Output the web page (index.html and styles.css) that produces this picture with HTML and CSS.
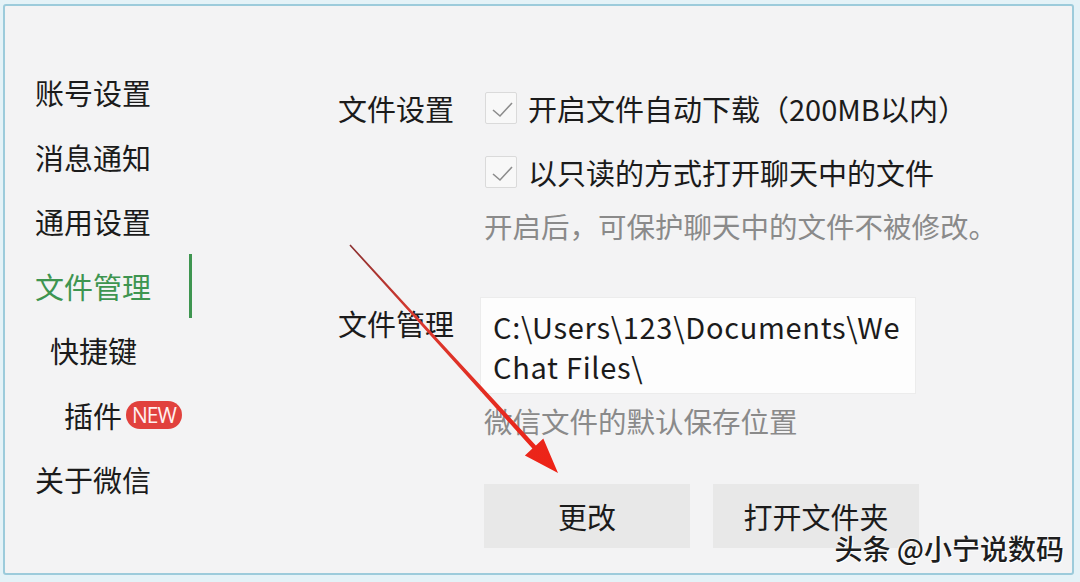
FILE: index.html
```html
<!DOCTYPE html>
<html lang="zh-CN">
  <head>
    <meta charset="UTF-8" />
    <meta name="viewport" content="width=device-width, initial-scale=1.0" />
    <title>设置</title>

    <link rel="stylesheet" href="styles.css">
  </head>
  <body>
    <div class="window">
      <nav class="menu">
        <div class="menu-item">账号设置</div>
        <div class="menu-item">消息通知</div>
        <div class="menu-item">通用设置</div>
        <div class="menu-item menu-item-active">文件管理</div>
        <div class="menu-item menu-sub">快捷键</div>
        <div class="menu-item menu-sub-2">插件 <span class="badge">NEW</span></div>
        <div class="menu-item">关于微信</div>
      </nav>

      <main class="settings">
        <div class="row">
          <div class="row-label">文件设置</div>
          <div class="row-body">
            <label class="check">
              <span class="check-box">
                <svg viewBox="0 0 32 32" width="32" height="32"><polyline points="8,18 15,24 27,11" /></svg>
              </span>
              开启文件自动下载（200MB以内）
            </label>
            <label class="check">
              <span class="check-box">
                <svg viewBox="0 0 32 32" width="32" height="32"><polyline points="8,18 15,24 27,11" /></svg>
              </span>
              以只读的方式打开聊天中的文件
            </label>
            <p class="hint">开启后，可保护聊天中的文件不被修改。</p>
          </div>
        </div>

        <div class="row row-path">
          <div class="row-label row-label-path">文件管理</div>
          <div class="row-body">
            <div class="path-box">C:\Users\123\Documents\We<br />Chat Files\</div>
            <p class="hint hint-path">微信文件的默认保存位置</p>
            <div class="btn-group">
              <button class="btn">更改</button>
              <button class="btn">打开文件夹</button>
            </div>
          </div>
        </div>
      </main>

      <svg class="arrow" width="1080" height="582" viewBox="0 0 1080 582">
        <defs>
          <linearGradient id="arrowGrad" x1="350" y1="245" x2="557" y2="472" gradientUnits="userSpaceOnUse">
            <stop offset="0" stop-color="#8a3030" />
            <stop offset="0.3" stop-color="#d8392f" />
            <stop offset="1" stop-color="#ee2216" />
          </linearGradient>
        </defs>
        <polygon points="349.4,245.5 532.4,448.6 524.9,455.4 558,473 543.3,438.6 535.9,445.4 350.6,244.5" fill="url(#arrowGrad)" />
      </svg>

      <div class="watermark">头条 @小宁说数码</div>
    </div>
  </body>
</html>
```

FILE: styles.css
```css
:root {
  --bg-outer: #e4f2f7;
  --bg-window: #f3f3f4;
  --border-window: #9ccbdb;
  --text-dark: #1b1b1b;
  --text-gray: #8a8a8a;
  --green: #3e9550;
  --badge: #e1413d;
  --btn: #e8e8e8;
  --white: #fdfdfd;
}

* {
  margin: 0;
  padding: 0;
  box-sizing: border-box;
}

body {
  width: 1080px;
  height: 582px;
  overflow: hidden;

  padding: 4px 6px 7px 3px;

  font-family: "Noto Sans CJK SC", "Noto Sans", sans-serif;
  font-size: 29px;
  font-weight: 400;

  background: var(--bg-outer);
  color: var(--text-dark);
}

.window {
  position: relative;
  width: 1071px;
  height: 571px;

  display: flex;

  border: 2px solid var(--border-window);
  border-radius: 3px;
  background: var(--bg-window);
}

.menu {
  width: 187px;
  flex-shrink: 0;

  display: flex;
  flex-direction: column;

  padding-top: 54px;
}

.menu-item {
  height: 64.5px;

  display: flex;
  align-items: center;

  padding-left: 30px;
  white-space: nowrap;
}

.menu-item-active {
  color: var(--green);
  border-right: 3px solid var(--green);
}

.menu-sub {
  padding-left: 45px;
}

.menu-sub-2 {
  padding-left: 59px;
  gap: 4px;
}

.badge {
  height: 28px;
  padding: 0 6px;

  display: flex;
  align-items: center;

  border-radius: 14px;
  background: var(--badge);
  color: #fff0f0;

  font-family: "Open Sans", sans-serif;
  font-size: 21px;
  letter-spacing: -1px;
}

.settings {
  flex: 1;
  padding: 70px 0 0 146px;
}

.row {
  display: flex;
}

.row-label {
  width: 144px;
  flex-shrink: 0;
  line-height: 64px;
}

.row-label-path {
  line-height: 40px;
  margin-top: 6px;
}

.row-path {
  margin-top: 49px;
}

.check {
  height: 64px;

  display: flex;
  align-items: center;
  gap: 11px;

  padding-left: 3px;
  white-space: nowrap;
}

.check-box {
  width: 32px;
  height: 32px;

  border: 1px solid #dadada;
  border-radius: 2px;
  background: #f8f8f8;
}

.check-box svg {
  display: block;
  margin: -1px;
}

.check-box polyline {
  fill: none;
  stroke: #8c8c8c;
  stroke-width: 1.6;
}

.hint {
  height: 44px;
  line-height: 44px;
  padding-left: 2px;

  color: var(--text-gray);
  font-size: 28.5px;
  white-space: nowrap;
}

.hint-path {
  margin-top: 5px;
}

.path-box {
  width: 436px;
  margin-left: -2px;
  padding: 8px 12px 7px;

  line-height: 40px;
  letter-spacing: 0.7px;
  white-space: nowrap;

  border: 1px solid #ececec;
  background: var(--white);
}

.btn-group {
  display: flex;
  gap: 23px;

  margin-top: 41px;
  padding-left: 2px;
}

.btn {
  width: 206px;
  height: 64px;

  border: none;
  background: var(--btn);
  color: var(--text-dark);

  font-family: inherit;
  font-size: 29px;
}

.arrow {
  position: absolute;
  top: -6px;
  left: -5px;
  pointer-events: none;
}

.watermark {
  position: absolute;
  right: 8px;
  bottom: 5px;

  color: #1e1e1e;
  font-size: 28px;
  font-weight: 500;
  text-shadow: 0 0 2px #fff, 0 0 2px #fff, 1px 1px 0 #fff;
}
```
